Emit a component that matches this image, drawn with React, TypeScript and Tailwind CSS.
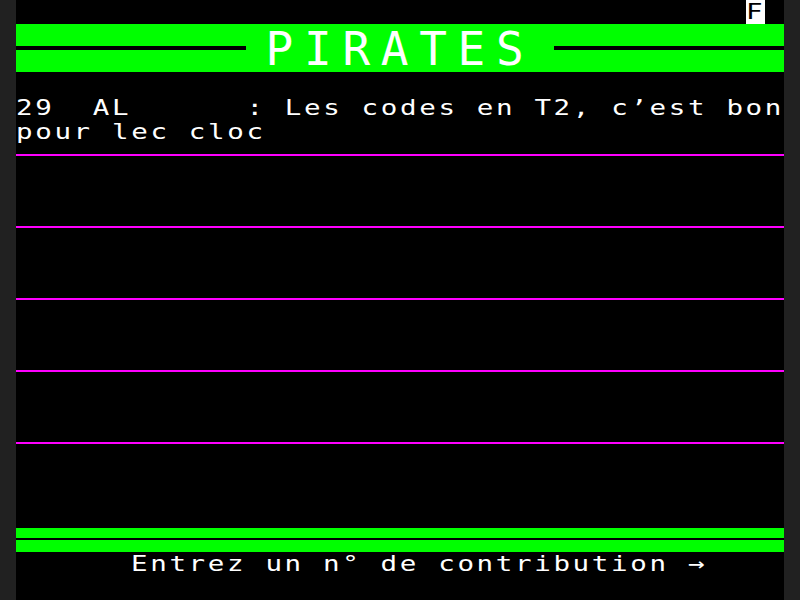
import React from 'react';

// Minitel-style page: 40 columns x 25 rows, each cell 19.2 x 24 px
const mono = "font-['DejaVu_Sans_Mono',monospace]";

const TextRow = ({ text, indent = false }: { text: string; indent?: boolean }) => (
  <div className={`h-[24px] overflow-visible ${indent ? 'pl-[115.2px]' : ''}`}>
    <span className="inline-block origin-left scale-x-125 whitespace-pre text-[22px] leading-[24px] tracking-[2.115px] text-white">
      {text}
    </span>
  </div>
);

const Slot = () => (
  <div className="h-[72px] pt-[10px]">
    <div className="h-[2px] bg-[#ff00ff]" />
  </div>
);

const App = () => {
  return (
    <div className={`w-[800px] h-[600px] bg-[#212121] flex justify-center ${mono}`}>
      <div className="w-[768px] h-full bg-black flex flex-col overflow-hidden">
        <div className="h-[24px] flex justify-end pr-[19.2px]">
          <div className="w-[19.2px] h-[24px] bg-white">
            <span className="inline-block origin-left scale-x-125 text-[22px] leading-[24px] text-black">F</span>
          </div>
        </div>

        <div className="h-[48px] bg-[#00ff00] flex items-center">
          <div className="w-[230.4px] h-[4px] bg-black" />
          <div className="w-[307.2px] h-[48px] pl-[19.2px] pt-px">
            <span className="block whitespace-pre text-[46px] leading-[48px] tracking-[10.706px] text-white">PIRATES</span>
          </div>
          <div className="w-[230.4px] h-[4px] bg-black" />
        </div>

        <div className="h-[24px]" />
        <TextRow text="29  AL      : Les codes en T2, c’est bon" />
        <TextRow text="pour lec cloc" />

        <Slot />
        <Slot />
        <Slot />
        <Slot />
        <Slot />

        <div className="h-[24px]" />
        <div className="h-[10px] bg-[#00ff00]" />
        <div className="h-[2px]" />
        <div className="h-[12px] bg-[#00ff00]" />

        <TextRow text="Entrez un n° de contribution →" indent />
      </div>
    </div>
  );
};

export default App;
